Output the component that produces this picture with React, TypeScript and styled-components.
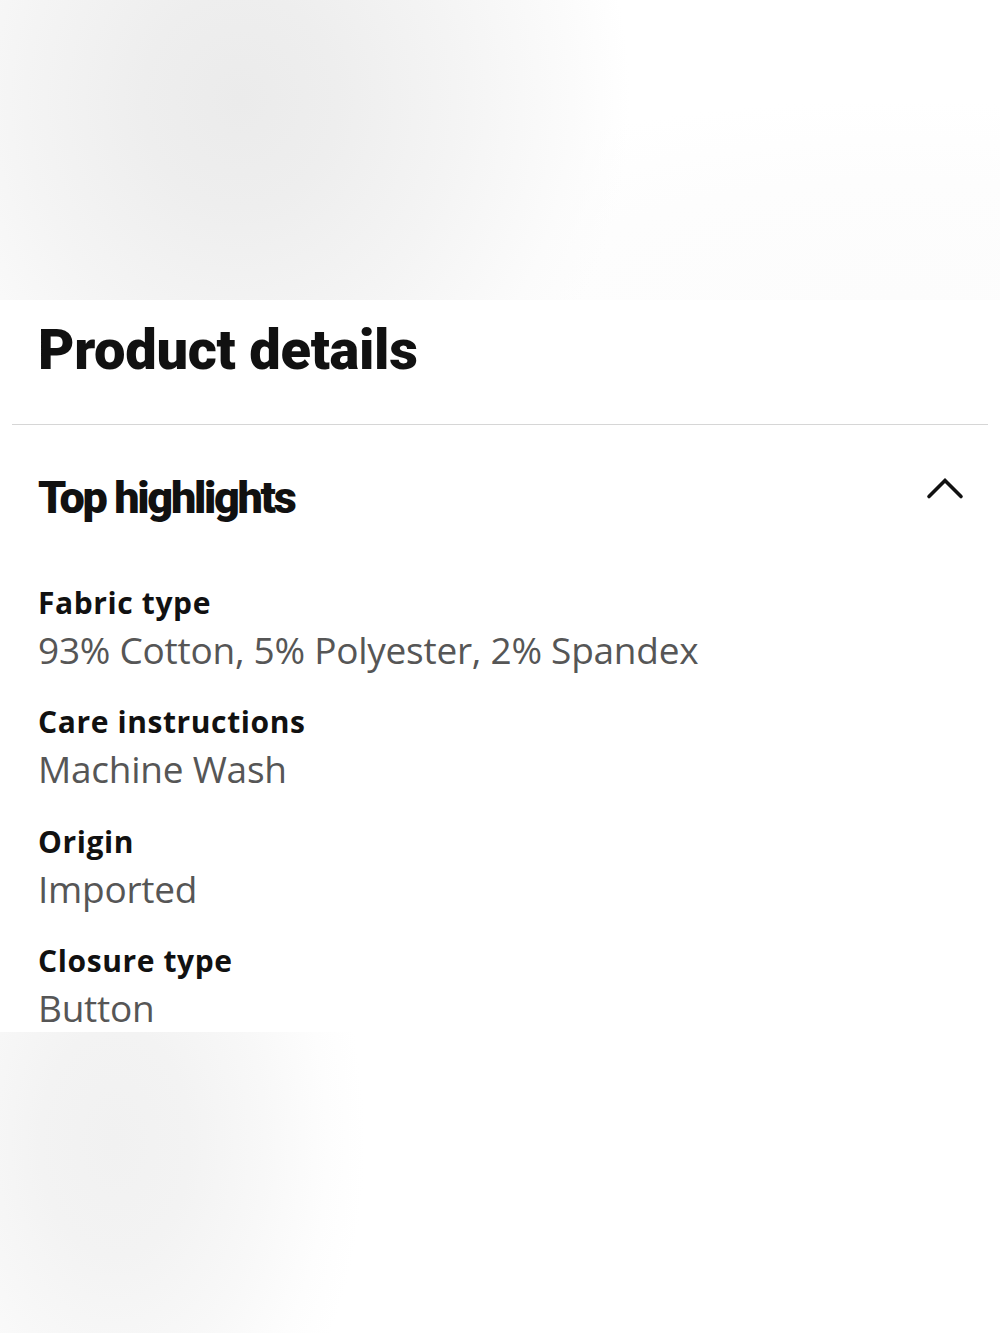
import React from "react";
import styled, { createGlobalStyle } from "styled-components";

const Global = createGlobalStyle`
  html, body { margin: 0; padding: 0; background: #ffffff; }
  body { font-family: "Open Sans", "Liberation Sans", sans-serif; }
`;

const Page = styled.div`
  width: 1000px;
  display: flex;
  flex-direction: column;
`;

const TopBand = styled.div`
  height: 300px;
  background:
    radial-gradient(ellipse 390px 430px at 240px 100px, #ebebeb 0%, #eeeeee 25%, #f4f4f4 55%, #fbfbfb 85%, rgba(255,255,255,0) 100%),
    radial-gradient(ellipse 600px 200px at 900px 300px, #fcfcfc 0%, #fdfdfd 60%, #ffffff 100%);
  background-color: #ffffff;
`;

const Content = styled.section`
  height: 732px;
  overflow: hidden;
  background: #ffffff;
  display: flex;
  flex-direction: column;
  padding-top: 18px;
  box-sizing: border-box;
`;

const Title = styled.h1`
  margin: 0;
  padding: 0 38px;
  font-family: Roboto, "Liberation Sans", sans-serif;
  font-weight: 900;
  font-size: 56px;
  line-height: 64px;
  letter-spacing: -0.3px;
  color: #111111;
`;

const Divider = styled.hr`
  margin: 42px 12px 0;
  border: 0;
  height: 2px;
  background: #d6d6d6;
`;

const AccordionHeader = styled.div`
  margin-top: 45px;
  padding: 0 38px;
  display: flex;
  justify-content: space-between;
  align-items: flex-start;
`;

const SectionTitle = styled.h2`
  margin: 0;
  font-family: Roboto, "Liberation Sans", sans-serif;
  font-weight: 900;
  font-size: 45px;
  line-height: 56px;
  letter-spacing: -2.35px;
  color: #111111;
`;

const ChevronButton = styled.button`
  margin: 6px -3px 0 0;
  padding: 0;
  border: 0;
  background: none;
  width: 40px;
  height: 24px;
  display: flex;
`;

const List = styled.dl`
  margin: 60px 0 0;
  padding: 0 38px;
  display: flex;
  flex-direction: column;
  gap: 31.5px;
`;

const Item = styled.div`
  display: flex;
  flex-direction: column;
  gap: 6px;
`;

const Label = styled.dt`
  margin: 0;
  font-family: "Open Sans", "Liberation Sans", sans-serif;
  font-weight: 700;
  font-size: 30px;
  line-height: 34px;
  letter-spacing: 0.6px;
  color: #111111;
`;

const Value = styled.dd`
  margin: 0;
  font-family: "Open Sans", "Liberation Sans", sans-serif;
  font-weight: 400;
  font-size: 37px;
  line-height: 48px;
  letter-spacing: -0.25px;
  color: #565656;
`;

const BottomBand = styled.div`
  height: 301px;
  background:
    radial-gradient(ellipse 250px 380px at 115px 110px, #f1f1f1 0%, #f3f3f3 30%, #f8f8f8 60%, #fdfdfd 85%, #ffffff 100%);
  background-color: #ffffff;
`;

const Chevron = () => (
  <svg width="40" height="24" viewBox="0 0 40 24" fill="none">
    <path
      d="M4 20.5 L20 4.5 L36 20.5"
      stroke="#111111"
      strokeWidth="3.6"
      strokeLinecap="round"
      strokeLinejoin="miter"
    />
  </svg>
);

const details = [
  { label: "Fabric type", value: "93% Cotton, 5% Polyester, 2% Spandex" },
  { label: "Care instructions", value: "Machine Wash" },
  { label: "Origin", value: "Imported" },
  { label: "Closure type", value: "Button" },
];

export default function App() {
  return (
    <>
      <Global />
      <Page>
        <TopBand />
        <Content>
          <Title>Product details</Title>
          <Divider />
          <AccordionHeader>
            <SectionTitle>Top highlights</SectionTitle>
            <ChevronButton aria-label="Collapse">
              <Chevron />
            </ChevronButton>
          </AccordionHeader>
          <List>
            {details.map((d) => (
              <Item key={d.label}>
                <Label>{d.label}</Label>
                <Value>{d.value}</Value>
              </Item>
            ))}
          </List>
        </Content>
        <BottomBand />
      </Page>
    </>
  );
}
